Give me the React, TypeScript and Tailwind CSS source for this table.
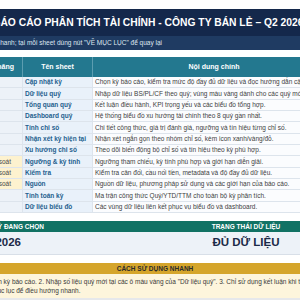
const rows = [
  { sheet: "Cập nhật kỳ", desc: "Chọn kỳ báo cáo, kiểm tra mức độ đầy đủ dữ liệu và đọc hướng dẫn cập nhật.", ctl: false },
  { sheet: "Dữ liệu quý", desc: "Nhập dữ liệu BS/PL/CF theo quý; vùng màu vàng dành cho các quý mới.", ctl: false },
  { sheet: "Tổng quan quý", desc: "Kết luận điều hành, KPI trọng yếu và các biểu đồ tổng hợp.", ctl: false },
  { sheet: "Dashboard quý", desc: "Hệ thống biểu đồ xu hướng tài chính theo 8 quý gần nhất.", ctl: false },
  { sheet: "Tính chỉ số", desc: "Chi tiết công thức, giá trị đánh giá, ngưỡng và tín hiệu từng chỉ số.", ctl: false },
  { sheet: "Nhận xét kỳ hiện tại", desc: "Nhận xét ngắn gọn theo nhóm chỉ số, kèm icon xanh/vàng/đỏ.", ctl: false },
  { sheet: "Xu hướng chỉ số", desc: "Theo dõi biến động bộ chỉ số và tín hiệu theo kỳ phù hợp.", ctl: false },
  { sheet: "Ngưỡng & kỳ tính", desc: "Ngưỡng tham chiếu, kỳ tính phù hợp và giới hạn diễn giải.", ctl: true },
  { sheet: "Kiểm tra", desc: "Kiểm tra cân đối, cầu nối tiền, metadata và độ đầy đủ dữ liệu.", ctl: true },
  { sheet: "Nguồn", desc: "Nguồn dữ liệu, phương pháp sử dụng và các giới hạn của báo cáo.", ctl: true },
  { sheet: "Tính toán kỳ", desc: "Ma trận công thức Quý/YTD/TTM cho toàn bộ kỳ phân tích.", ctl: false },
  { sheet: "Dữ liệu biểu đồ", desc: "Các vùng dữ liệu liên kết phục vụ biểu đồ và dashboard.", ctl: false },
];

export default function App() {
  return (
    <div className="w-[300px] h-[300px] overflow-hidden bg-white font-['Liberation_Sans',Arial,sans-serif] flex flex-col">
      {/* title */}
      <div className="mt-[9px] h-[27px] bg-[#14284b] flex items-center whitespace-nowrap overflow-hidden">
        <span className="ml-[-7px] text-white text-[10.3px] font-bold">BÁO CÁO PHÂN TÍCH TÀI CHÍNH - CÔNG TY BÁN LẺ – Q2 2026</span>
      </div>
      <div className="h-[14px] bg-[#1f3b62] flex items-center justify-end w-full whitespace-nowrap overflow-hidden">
        <div className="w-full flex justify-end pr-[138px]">
          <span className="text-[#dfe7f1] text-[6.5px]">Dùng mục lục để điều hướng nhanh; tại mỗi sheet dùng nút "VỀ MỤC LỤC" để quay lại</span>
        </div>
      </div>

      {/* table */}
      <div className="mt-[7px] flex flex-col">
        <div className="h-[20px] bg-[#23788f] flex text-white text-[7px] font-bold whitespace-nowrap">
          <div className="w-[23px] shrink-0 flex items-center justify-end pr-[8px] border-r border-[#5c9db0] overflow-hidden">Chức năng</div>
          <div className="w-[70px] shrink-0 flex items-center justify-center border-r border-[#5c9db0]">Tên sheet</div>
          <div className="w-[242px] shrink-0 flex items-center justify-center">Nội dung chính</div>
        </div>
        {rows.map((r) => (
          <div key={r.sheet} className="h-[11.33px] flex whitespace-nowrap border-b border-[#dde4ec]">
            <div className={`w-[23px] shrink-0 flex items-center justify-end pr-[11px] overflow-hidden border-r border-[#dde4ec] text-[6.5px] text-[#4a4a4a] ${r.ctl ? "bg-[#fdf2cf]" : "bg-[#edf2f8]"}`}>
              {r.ctl ? "Kiểm soát" : ""}
            </div>
            <div className="w-[70px] shrink-0 flex items-center pl-[2px] bg-[#e9f1fa] border-r border-[#dde4ec] text-[6.5px] font-bold text-[#1f5f8e]">
              {r.sheet}
            </div>
            <div className="flex-1 flex items-center pl-[2px] bg-[#fbfcfe] text-[6.5px] text-[#3e3e3e]">{r.desc}</div>
          </div>
        ))}
      </div>

      {/* status panels */}
      <div className="mt-[8px] flex">
        <div className="w-[192px] flex flex-col">
          <div className="h-[11px] bg-[#117264] flex items-center justify-end pr-[148px] whitespace-nowrap text-white text-[6.5px] font-bold">KỲ ĐANG CHỌN</div>
          <div className="h-[23px] bg-[#edf2f8] border-b border-[#d8dfe8] flex items-center justify-end pr-[171px] whitespace-nowrap text-[#1b2a48] text-[11.5px] font-bold">Q2 2026</div>
        </div>
        <div className="flex-1 flex flex-col">
          <div className="h-[11px] bg-[#117264] flex items-center justify-center whitespace-nowrap text-white text-[6.5px] font-bold">TRẠNG THÁI DỮ LIỆU</div>
          <div className="h-[23px] bg-[#edf2f8] border-b border-[#d8dfe8] flex items-center justify-center whitespace-nowrap text-[#1b2a48] text-[11.5px] font-bold">ĐỦ DỮ LIỆU</div>
        </div>
      </div>

      {/* guide */}
      <div className="mt-[8px] h-[11px] bg-[#d5a52b] flex items-center justify-center pl-[10px] whitespace-nowrap text-[#2a2a2a] text-[6.5px] font-bold">CÁCH SỬ DỤNG NHANH</div>
      <div className="h-[24px] bg-[#fdf5dc] flex flex-col justify-center whitespace-nowrap text-[#3a3a3a] text-[6.5px] leading-[9px]">
        <span className="ml-[-21px]">1. Chọn kỳ báo cáo.  2. Nhập số liệu quý mới tại các ô màu vàng của "Dữ liệu quý".  3. Chỉ sử dụng kết luận khi trạng thái dữ liệu là đủ.</span>
        <span className="ml-[-8px]">mục lục để điều hướng nhanh.</span>
      </div>
      <div className="flex-1 bg-[#e6e8eb]" />
    </div>
  );
}
